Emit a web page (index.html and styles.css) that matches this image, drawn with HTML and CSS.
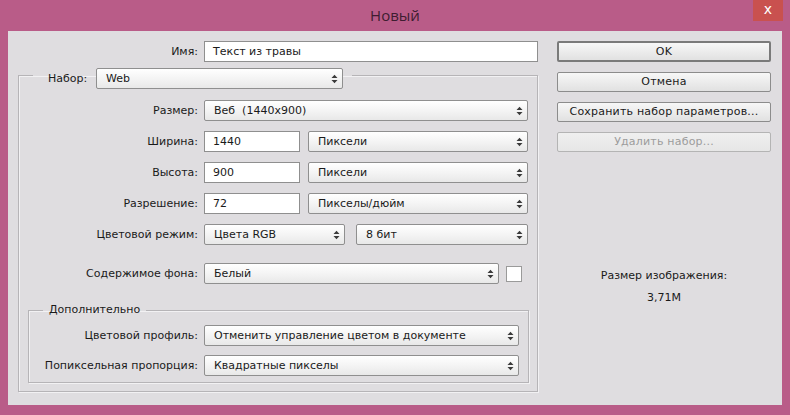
FILE: index.html
```html
<!DOCTYPE html>
<html lang="ru">
<head>
<meta charset="utf-8">
<title>Новый</title>
<link rel="stylesheet" href="styles.css">
</head>
<body>
<div class="window">
  <div class="titlebar">
    <span></span>
    <span class="title">Новый</span>
    <span class="close">x</span>
  </div>
  <div class="client">
    <div class="main">
      <div class="row name-row">
        <span class="lbl lbl-top">Имя:</span>
        <div class="input w-name">Текст из травы</div>
      </div>
      <fieldset class="group">
        <legend class="group-legend">
          <span class="legend-lbl">Набор:</span>
          <div class="select w-preset"><span>Web</span><svg class="arr" width="7" height="10" viewBox="0 0 7 10"><path d="M0.5 4 L3.5 0.8 L6.5 4 Z M0.5 6 L3.5 9.2 L6.5 6 Z"/></svg></div>
        </legend>
        <div class="rows">
          <div class="row">
            <span class="lbl">Размер:</span>
            <div class="select w-size"><span>Веб&nbsp;&nbsp;(1440x900)</span><svg class="arr" width="7" height="10" viewBox="0 0 7 10"><path d="M0.5 4 L3.5 0.8 L6.5 4 Z M0.5 6 L3.5 9.2 L6.5 6 Z"/></svg></div>
          </div>
          <div class="row">
            <span class="lbl">Ширина:</span>
            <div class="input w-num">1440</div>
            <div class="select w-unit"><span>Пиксели</span><svg class="arr" width="7" height="10" viewBox="0 0 7 10"><path d="M0.5 4 L3.5 0.8 L6.5 4 Z M0.5 6 L3.5 9.2 L6.5 6 Z"/></svg></div>
          </div>
          <div class="row">
            <span class="lbl">Высота:</span>
            <div class="input w-num">900</div>
            <div class="select w-unit"><span>Пиксели</span><svg class="arr" width="7" height="10" viewBox="0 0 7 10"><path d="M0.5 4 L3.5 0.8 L6.5 4 Z M0.5 6 L3.5 9.2 L6.5 6 Z"/></svg></div>
          </div>
          <div class="row">
            <span class="lbl">Разрешение:</span>
            <div class="input w-num">72</div>
            <div class="select w-unit"><span>Пикселы/дюйм</span><svg class="arr" width="7" height="10" viewBox="0 0 7 10"><path d="M0.5 4 L3.5 0.8 L6.5 4 Z M0.5 6 L3.5 9.2 L6.5 6 Z"/></svg></div>
          </div>
          <div class="row">
            <span class="lbl">Цветовой режим:</span>
            <div class="select w-mode"><span>Цвета RGB</span><svg class="arr" width="7" height="10" viewBox="0 0 7 10"><path d="M0.5 4 L3.5 0.8 L6.5 4 Z M0.5 6 L3.5 9.2 L6.5 6 Z"/></svg></div>
            <div class="select w-bits"><span>8 бит</span><svg class="arr" width="7" height="10" viewBox="0 0 7 10"><path d="M0.5 4 L3.5 0.8 L6.5 4 Z M0.5 6 L3.5 9.2 L6.5 6 Z"/></svg></div>
          </div>
          <div class="row row-bg">
            <span class="lbl">Содержимое фона:</span>
            <div class="select w-bg"><span>Белый</span><svg class="arr" width="7" height="10" viewBox="0 0 7 10"><path d="M0.5 4 L3.5 0.8 L6.5 4 Z M0.5 6 L3.5 9.2 L6.5 6 Z"/></svg></div>
            <div class="swatch"></div>
          </div>
        </div>
        <fieldset class="sub">
          <legend class="sub-legend">Дополнительно</legend>
          <div class="rows sub-rows">
            <div class="row">
              <span class="lbl lbl-sub">Цветовой профиль:</span>
              <div class="select w-sub"><span>Отменить управление цветом в документе</span><svg class="arr" width="7" height="10" viewBox="0 0 7 10"><path d="M0.5 4 L3.5 0.8 L6.5 4 Z M0.5 6 L3.5 9.2 L6.5 6 Z"/></svg></div>
            </div>
            <div class="row">
              <span class="lbl lbl-sub">Попиксельная пропорция:</span>
              <div class="select w-sub"><span>Квадратные пикселы</span><svg class="arr" width="7" height="10" viewBox="0 0 7 10"><path d="M0.5 4 L3.5 0.8 L6.5 4 Z M0.5 6 L3.5 9.2 L6.5 6 Z"/></svg></div>
            </div>
          </div>
        </fieldset>
      </fieldset>
    </div>
    <div class="side">
      <div class="btn btn-default">OK</div>
      <div class="btn">Отмена</div>
      <div class="btn">Сохранить набор параметров...</div>
      <div class="btn btn-disabled">Удалить набор...</div>
      <div class="info">
        <div class="info-line">Размер изображения:</div>
        <div class="info-line info-value">3,71M</div>
      </div>
    </div>
  </div>
</div>
</body>
</html>
```

FILE: styles.css
```css
html, body {
  margin: 0;
  padding: 0;
}
body {
  background: #b95c88;
  width: 790px;
  height: 415px;
  overflow: hidden;
  font-family: "DejaVu Sans", sans-serif;
  font-size: 11px;
  color: #1a1a1a;
}
.window {
  width: 790px;
  height: 415px;
  display: flex;
  flex-direction: column;
}
.titlebar {
  height: 31px;
  display: grid;
  grid-template-columns: 1fr auto 1fr;
  padding: 0 7px;
}
.title {
  font-family: "Open Sans", "Noto Sans", sans-serif;
  font-size: 15px;
  color: #3e1d31;
  line-height: 31px;
}
.close {
  justify-self: end;
  width: 30px;
  height: 21px;
  background: #c9514f;
  color: #ffffff;
  font-family: "DejaVu Sans", sans-serif;
  font-size: 14px;
  line-height: 19px;
  text-align: center;
}
.client {
  margin: 0 8px 10px 8px;
  height: 374px;
  background: #dfdde0;
  box-sizing: border-box;
  padding: 10px 11px 0 10px;
  display: flex;
  gap: 19px;
}
.main {
  width: 520px;
  display: flex;
  flex-direction: column;
}
.row {
  display: flex;
  align-items: center;
  height: 21px;
  margin-right: 9px;
}
.name-row {
  margin-right: 0;
}
.lbl {
  width: 179px;
  flex: none;
  text-align: right;
  margin-right: 6px;
  white-space: nowrap;
}
.lbl-top {
  width: 180px;
}
.lbl-sub {
  width: 169px;
}
.input {
  box-sizing: border-box;
  height: 21px;
  border: 1px solid #8f8f8f;
  background: #ffffff;
  padding: 0 8px;
  line-height: 19px;
  white-space: nowrap;
}
.select {
  box-sizing: border-box;
  height: 21px;
  border: 1px solid #8f8f8f;
  border-radius: 2px;
  background: linear-gradient(#ffffff, #f3f3f3 55%, #e8e8e8);
  padding: 0 4px 0 9px;
  display: flex;
  align-items: center;
  justify-content: space-between;
  white-space: nowrap;
}
.arr {
  fill: #3a3a3a;
  flex: none;
}
.w-name { width: 334px; }
.w-preset { width: 247px; }
.w-size { width: 324px; }
.w-num { width: 96px; margin-right: 8px; }
.w-unit { width: 220px; }
.w-mode { width: 141px; margin-right: 11px; }
.w-bits { width: 172px; }
.w-bg { width: 295px; margin-right: 7px; }
.w-sub { width: 315px; }
.swatch {
  box-sizing: border-box;
  width: 16px;
  height: 16px;
  background: #ffffff;
  border: 1px solid #9a9a9a;
}
.group {
  margin: 0;
  padding: 0 0 8px 0;
  border: 1px solid #b6b4b7;
  box-shadow: inset 1px 1px 0 #f2f1f3, 1px 1px 0 #f2f1f3;
  min-width: 0;
}
.group-legend {
  display: flex;
  align-items: center;
  gap: 4px;
  margin-left: 14px;
  padding: 6px 9px 0 15px;
}
.legend-lbl {
  width: 44px;
  white-space: nowrap;
}
.rows {
  display: flex;
  flex-direction: column;
  gap: 10px;
  margin-top: 11px;
}
.row-bg {
  margin-top: 8px;
}
.sub {
  margin: 19px 8px 0 9px;
  padding: 0 0 6px 0;
  border: 1px solid #b6b4b7;
  box-shadow: inset 1px 1px 0 #f2f1f3, 1px 1px 0 #f2f1f3;
  min-width: 0;
}
.sub-legend {
  margin-left: 14px;
  padding: 0 6px;
  line-height: 14px;
}
.sub-rows {
  gap: 9px;
  margin-top: 8px;
}
.sub-rows .row {
  margin-right: 0;
}
.side {
  width: 214px;
  display: flex;
  flex-direction: column;
}
.btn {
  box-sizing: border-box;
  height: 20px;
  margin-bottom: 10px;
  border: 1px solid #8c8c8c;
  border-radius: 2px;
  background: linear-gradient(#f7f7f7, #ececec 50%, #e1e1e1);
  text-align: center;
  line-height: 18px;
  white-space: nowrap;
  letter-spacing: 0.2px;
}
.btn-default {
  height: 21px;
  border: 2px solid #7a7a7a;
  line-height: 17px;
}
.btn-disabled {
  color: #9c9c9c;
  border-color: #b4b4b4;
  background: linear-gradient(#efefef, #e6e6e6);
}
.info {
  margin-top: 107px;
  text-align: center;
}
.info-line {
  line-height: 14px;
}
.info-value {
  margin-top: 8px;
}
```
